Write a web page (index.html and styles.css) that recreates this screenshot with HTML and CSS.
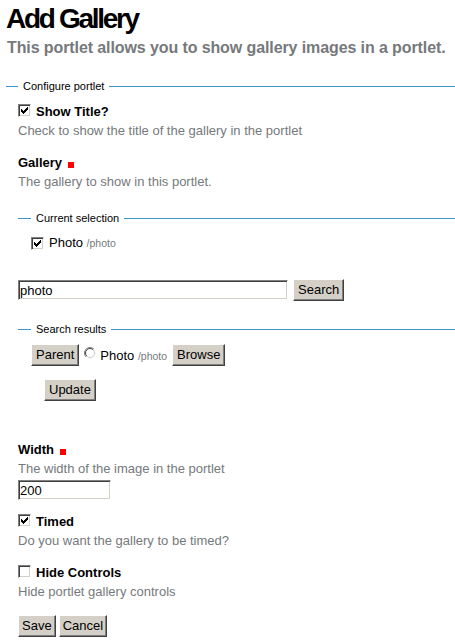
FILE: index.html
```html
<!DOCTYPE html>
<html>
<head>
<meta charset="utf-8">
<title>Add Gallery</title>
<link rel="stylesheet" href="styles.css">
</head>
<body>
<h1 class="title">Add Gallery</h1>
<p class="description">This portlet allows you to show gallery images in a portlet.</p>

<fieldset class="fs fs-outer">
  <legend class="legend">Configure portlet</legend>

  <div class="field field-first">
    <div class="lbl-row">
      <span class="cb"><svg class="check" width="11" height="11" viewBox="0 0 11 11"><path d="M2 4h1v3h-1zM3 5h1v3h-1zM4 6h1v3h-1zM5 5h1v3h-1zM6 4h1v3h-1zM7 3h1v3h-1zM8 2h1v3h-1z" fill="#000"/></svg></span>
      <span class="lbl">Show Title?</span>
    </div>
    <div class="help">Check to show the title of the gallery in the portlet</div>
  </div>

  <div class="field field-gallery">
    <div class="lbl-row"><span class="lbl">Gallery</span><span class="req"></span></div>
    <div class="help">The gallery to show in this portlet.</div>

    <fieldset class="fs fs-inner fs-current">
      <legend class="legend">Current selection</legend>
      <div class="lbl-row sel-row">
        <span class="cb cb-sel"><svg class="check" width="11" height="11" viewBox="0 0 11 11"><path d="M2 4h1v3h-1zM3 5h1v3h-1zM4 6h1v3h-1zM5 5h1v3h-1zM6 4h1v3h-1zM7 3h1v3h-1zM8 2h1v3h-1z" fill="#000"/></svg></span>
        <span class="item">Photo <span class="path">/photo</span></span>
      </div>
    </fieldset>

    <div class="search-row">
      <input class="text search-input" type="text" value="photo">
      <button class="btn" type="button">Search</button>
    </div>

    <fieldset class="fs fs-inner fs-results">
      <legend class="legend">Search results</legend>
      <div class="result-row">
        <button class="btn" type="button">Parent</button>
        <span class="radio"><svg width="12" height="12" viewBox="0 0 12 12"><circle cx="6" cy="6" r="5.5" fill="#fff"/><path d="M2.1 9.9A5.5 5.5 0 0 1 9.9 2.1" fill="none" stroke="#808080"/><path d="M9.9 2.1A5.5 5.5 0 0 1 2.1 9.9" fill="none" stroke="#f4f4f4"/><path d="M2.8 9.2A4.5 4.5 0 0 1 9.2 2.8" fill="none" stroke="#404040"/><path d="M9.2 2.8A4.5 4.5 0 0 1 2.8 9.2" fill="none" stroke="#d4d0c8"/></svg></span>
        <span class="item">Photo <span class="path">/photo</span></span>
        <button class="btn btn-browse" type="button">Browse</button>
      </div>
      <div class="update-row">
        <button class="btn" type="button">Update</button>
      </div>
    </fieldset>
  </div>

  <div class="field field-width">
    <div class="lbl-row"><span class="lbl">Width</span><span class="req"></span></div>
    <div class="help">The width of the image in the portlet</div>
    <input class="text width-input" type="text" value="200">
  </div>

  <div class="field">
    <div class="lbl-row">
      <span class="cb"><svg class="check" width="11" height="11" viewBox="0 0 11 11"><path d="M2 4h1v3h-1zM3 5h1v3h-1zM4 6h1v3h-1zM5 5h1v3h-1zM6 4h1v3h-1zM7 3h1v3h-1zM8 2h1v3h-1z" fill="#000"/></svg></span>
      <span class="lbl">Timed</span>
    </div>
    <div class="help">Do you want the gallery to be timed?</div>
  </div>

  <div class="field">
    <div class="lbl-row">
      <span class="cb"></span>
      <span class="lbl">Hide Controls</span>
    </div>
    <div class="help">Hide portlet gallery controls</div>
  </div>

  <div class="actions">
    <button class="btn" type="button">Save</button>
    <button class="btn" type="button">Cancel</button>
  </div>
</fieldset>
</body>
</html>
```
FILE: styles.css
```css
html, body {
  margin: 0;
  padding: 0;
  background: #fff;
}
body {
  font-family: "Liberation Sans", Arial, sans-serif;
  font-size: 13px;
  color: #000;
  width: 455px;
  overflow: hidden;
}
.title {
  margin: 3px 0 0 6px;
  font-size: 28px;
  line-height: 32px;
  font-weight: bold;
  letter-spacing: -2.3px;
  color: #000;
}
.description {
  margin: 3px 0 0 7px;
  font-size: 16px;
  line-height: 20px;
  font-weight: bold;
  letter-spacing: -0.1px;
  color: #76797c;
}
.fs {
  border: 0;
  border-top: 1px solid #3d94c9;
  min-width: 0;
  margin: 0;
  padding: 0;
}
.fs-outer {
  margin: 21px 0 0 6px;
  padding: 9px 0 0 12px;
}
.legend {
  font-size: 11px;
  line-height: 15px;
  padding: 0 5px;
  color: #000;
}
.field {
  margin-bottom: 13px;
}
.lbl-row {
  display: flex;
  align-items: flex-start;
  line-height: 18px;
  height: 18px;
}
.lbl {
  font-weight: bold;
}
.req {
  display: inline-block;
  width: 6px;
  height: 6px;
  background: #f00;
  margin: 8px 0 0 6px;
}
.help {
  color: #76797c;
  line-height: 20px;
}
.cb {
  box-sizing: border-box;
  width: 13px;
  height: 13px;
  margin: 1px 5px 0 0;
  border: 1px solid;
  border-color: #808080 #fff #fff #808080;
  box-shadow: inset 1px 1px #404040, inset -1px -1px #d4d0c8;
  background: #fff;
  flex: none;
}
.check {
  display: block;
}
.fs-current {
  margin-top: 19px;
  padding: 8px 0 0 13px;
}
.cb-sel {
  margin-top: 3px;
}
.item {
  font-size: 13px;
}
.path {
  font-size: 10.5px;
  color: #76797c;
}
.search-row {
  display: flex;
  align-items: center;
  margin-top: 27px;
  height: 22px;
}
.text {
  box-sizing: border-box;
  height: 20px;
  margin: 0;
  padding: 0 1px;
  font-family: "Liberation Sans", Arial, sans-serif;
  font-size: 13px;
  color: #000;
  border: 1px solid;
  border-color: #808080 #fff #fff #808080;
  box-shadow: inset 1px 1px #404040, inset -1px -1px #d4d0c8;
  background: #fff;
  outline: none;
}
.search-input {
  width: 270px;
  margin-right: 5px;
}
.btn {
  box-sizing: border-box;
  height: 22px;
  margin: 0;
  padding: 0 4px;
  font-family: "Liberation Sans", Arial, sans-serif;
  font-size: 13px;
  line-height: 16px;
  color: #000;
  background: #d4d0c8;
  border: 1px solid;
  border-color: #fff #404040 #404040 #fff;
  box-shadow: inset -1px -1px #808080;
  border-radius: 0;
}
.fs-results {
  margin-top: 21px;
  padding: 7px 0 0 13px;
}
.result-row {
  display: flex;
  align-items: center;
  height: 22px;
}
.radio {
  display: block;
  width: 12px;
  height: 12px;
  margin: 0 4px 4px 5px;
}
.radio svg {
  display: block;
}
.btn-browse {
  margin-left: 5px;
}
.update-row {
  margin: 13px 0 0 13px;
  height: 22px;
}
.field-gallery {
  margin-bottom: 40px;
}
.width-input {
  display: block;
  width: 93px;
  margin-top: 1px;
  margin-bottom: 2px;
}
.actions {
  display: flex;
  gap: 3px;
  margin-top: 11px;
}
.actions .btn {
  padding: 0 3px;
}
```
